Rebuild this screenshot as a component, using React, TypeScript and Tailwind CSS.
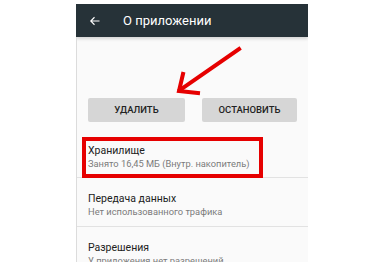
export default function App() {
  const items = [
    { title: 'Передача данных', sub: 'Нет использованного трафика' },
    { title: 'Разрешения', sub: 'У приложения нет разрешений' },
  ]

  return (
    <div className="relative h-[271px] w-[374px] overflow-hidden bg-white pl-[76px] pt-[4px] font-['Roboto',sans-serif]">
      <div className="flex h-[258px] w-[232px] flex-col overflow-hidden bg-[#fafafa]">
        <div className="flex h-[33px] shrink-0 items-center bg-[#263238] text-white shadow-[0_2px_3px_rgba(0,0,0,0.15)]">
          <svg width="12" height="12" viewBox="0 0 24 24" className="ml-[13px]" fill="none" stroke="white" strokeWidth="2.2">
            <path d="M21 12H4M11 4.5 3.5 12l7.5 7.5" />
          </svg>
          <span className="ml-[22px] text-[13px] leading-none">О приложении</span>
        </div>

        <div className="flex flex-1 flex-col border-l border-[#dcdcdc]">
          <div className="flex gap-[17px] pl-[11px] pt-[61px]">
            <button className="h-[24px] w-[97px] rounded-[2px] bg-[#d6d6d6] text-[9.5px] font-medium text-[#222]">
              УДАЛИТЬ
            </button>
            <button className="h-[24px] w-[95px] rounded-[2px] bg-[#d6d6d6] text-[9.5px] font-medium text-[#222]">
              ОСТАНОВИТЬ
            </button>
          </div>

          <div className="mt-[7px] flex h-[49px] shrink-0 flex-col border-b border-[#e2e2e2] pl-[11px] pt-[15px]">
            <span className="text-[10.5px] leading-[13px] text-[#212121]">Хранилище</span>
            <span className="text-[9.3px] leading-[13px] text-[#7a7a7a]">Занято 16,45 МБ (Внутр. накопитель)</span>
          </div>

          {items.map((it) => (
            <div key={it.title} className="flex h-[49px] shrink-0 flex-col border-b border-[#e2e2e2] pl-[11px] pt-[14px]">
              <span className="text-[10.5px] leading-[13px] text-[#212121]">{it.title}</span>
              <span className="text-[9.3px] leading-[13px] text-[#7a7a7a]">{it.sub}</span>
            </div>
          ))}
        </div>
      </div>

      {/* annotation: red frame */}
      <div className="absolute left-[82px] top-[137px] h-[41px] w-[181px] border-[4px] border-[#e60000]" />

      {/* annotation: arrow */}
      <svg className="absolute left-0 top-0" width="374" height="271" fill="none" stroke="#e60000" strokeWidth="4" strokeLinecap="square">
        <path d="M239 49 180 90" />
        <path d="M183 74 179 91 198 93" strokeLinejoin="miter" />
      </svg>
    </div>
  )
}
